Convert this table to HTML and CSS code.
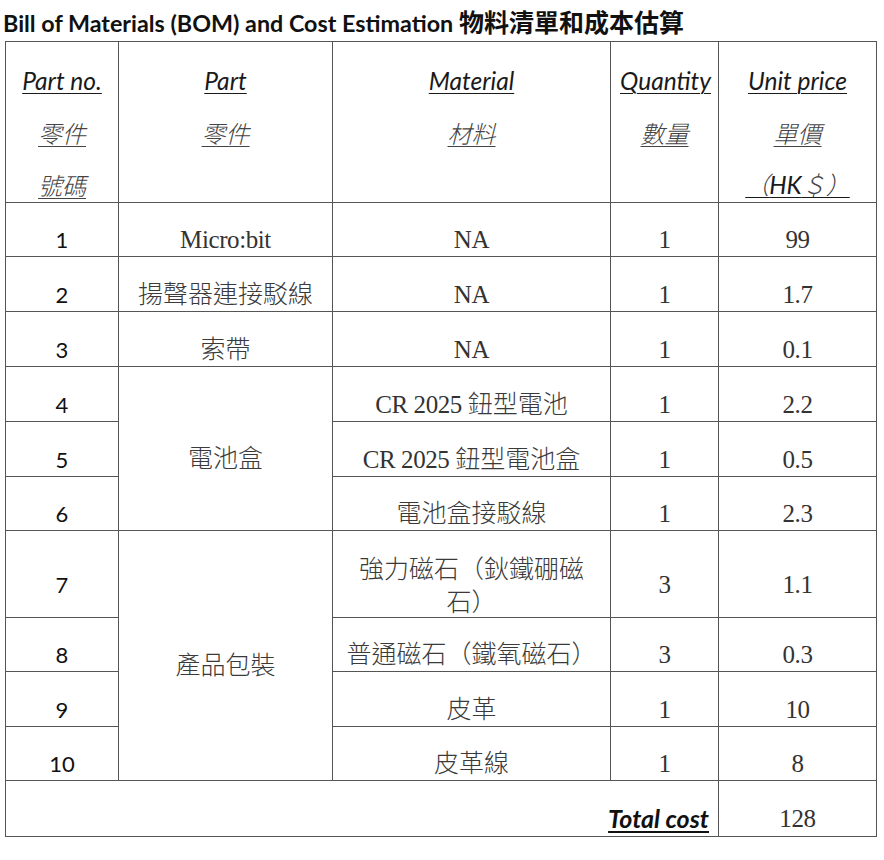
FILE: index.html
```html
<!DOCTYPE html>
<html lang="zh-Hant">
<head>
<meta charset="utf-8">
<title>BOM</title>
<link rel="stylesheet" href="styles.css">
</head>
<body>
<h1 class="title">Bill of Materials (BOM) and Cost Estimation <span class="zh">物料清單和成本估算</span></h1>
<table class="bom">
  <colgroup>
    <col class="c-no"><col class="c-part"><col class="c-mat"><col class="c-qty"><col class="c-price">
  </colgroup>
  <thead>
    <tr class="head">
      <th><div class="hl en">Part no.</div><div class="hl hz">零件</div><div class="hl hz">號碼</div></th>
      <th><div class="hl en">Part</div><div class="hl hz">零件</div></th>
      <th><div class="hl en">Material</div><div class="hl hz">材料</div></th>
      <th><div class="hl en">Quantity</div><div class="hl hz">數量</div></th>
      <th><div class="hl en">Unit price</div><div class="hl hz">單價</div><div class="hl mix"><span class="zh">（</span>HK<span class="zh">＄）</span></div></th>
    </tr>
  </thead>
  <tbody>
    <tr><td class="no">1</td><td>Micro:bit</td><td>NA</td><td>1</td><td>99</td></tr>
    <tr class="r55"><td class="no">2</td><td><span class="zh">揚聲器連接駁線</span></td><td>NA</td><td>1</td><td>1.7</td></tr>
    <tr class="r55"><td class="no">3</td><td><span class="zh">索帶</span></td><td>NA</td><td>1</td><td>0.1</td></tr>
    <tr class="r55"><td class="no">4</td><td rowspan="3"><span class="zh">電池盒</span></td><td>CR 2025 <span class="zh">鈕型電池</span></td><td>1</td><td>2.2</td></tr>
    <tr class="r55"><td class="no">5</td><td>CR 2025 <span class="zh">鈕型電池盒</span></td><td>1</td><td>0.5</td></tr>
    <tr><td class="no">6</td><td><span class="zh">電池盒接駁線</span></td><td>1</td><td>2.3</td></tr>
    <tr><td class="no">7</td><td rowspan="4"><span class="zh">產品包裝</span></td><td class="wrap">強力磁石（鈥鐵硼磁石）</td><td>3</td><td>1.1</td></tr>
    <tr><td class="no">8</td><td><span class="zh">普通磁石（鐵氧磁石）</span></td><td>3</td><td>0.3</td></tr>
    <tr class="r55"><td class="no">9</td><td><span class="zh">皮革</span></td><td>1</td><td>10</td></tr>
    <tr><td class="no">10</td><td><span class="zh">皮革線</span></td><td>1</td><td>8</td></tr>
    <tr class="total"><td colspan="4" class="total-label"><span>Total cost</span></td><td>128</td></tr>
  </tbody>
</table>
</body>
</html>
```
FILE: styles.css
```css
html, body {
  margin: 0;
  padding: 0;
  background: #ffffff;
}

body {
  padding: 0 0 0 3px;
  color: #1e1e1e;
}

.title {
  margin: 0;
  padding: 9px 0 0 0;
  font-family: Lato, "Noto Sans CJK TC", sans-serif;
  font-weight: 700;
  font-size: 23.3px;
  line-height: 28px;
  color: #111;
}

.title .zh {
  font-family: "Noto Sans CJK TC", sans-serif;
  font-size: 25px;
  font-weight: 700;
  line-height: 20px;
  color: #111;
}

.bom {
  margin: 4px 0 0 2px;
  border-collapse: collapse;
  table-layout: fixed;
  width: 871px;
  font-family: "Liberation Serif", "Noto Sans CJK TC", serif;
  font-size: 25px;
  letter-spacing: -0.4px;
  color: #333;
}

.c-no { width: 113px; }
.c-part { width: 214px; }
.c-mat { width: 278px; }
.c-qty { width: 108px; }
.c-price { width: 158px; }

.bom th,
.bom td {
  border: 1px solid #555;
  padding: 20px 9px 0;
  text-align: center;
  line-height: 33px;
}

.bom th {
  vertical-align: top;
  font-weight: 400;
  padding-top: 22px;
  padding-bottom: 1px;
}

.bom td {
  vertical-align: middle;
}

.hl {
  line-height: 33px;
  text-decoration: underline;
  text-decoration-thickness: 1px;
  text-underline-offset: 3px;
  font-style: italic;
  letter-spacing: 0;
}

.hl + .hl {
  margin-top: 19px;
}

.hl.en,
.hl.mix {
  font-family: Lato, sans-serif;
  font-size: 24.5px;
  color: #1a1a1a;
}

.hl.hz {
  font-family: "Noto Sans CJK TC", sans-serif;
  font-size: 24px;
  font-weight: 300;
  color: #444;
}

.hl.mix .zh {
  font-family: "Noto Sans CJK TC", sans-serif;
  font-weight: 300;
  font-size: 24px;
  line-height: 20px;
  color: #444;
}

.zh {
  font-family: "Noto Sans CJK TC", sans-serif;
  font-size: 25px;
  font-weight: 300;
  line-height: 24px;
  letter-spacing: 0;
  color: #3a3a3a;
}

.bom td.no {
  font-family: Lato, sans-serif;
  font-size: 22px;
  letter-spacing: 0;
  color: #111;
}

.bom td.wrap {
  padding-left: 10px;
  padding-right: 10px;
  font-family: "Noto Sans CJK TC", sans-serif;
  font-weight: 300;
  letter-spacing: 0;
  color: #3a3a3a;
}

.r55 td {
  height: 34px;
}

.total td {
  height: 35px;
}

.bom td.total-label {
  text-align: right;
  padding-right: 9px;
}

.total-label span {
  font-family: Lato, sans-serif;
  font-size: 25px;
  font-weight: 700;
  font-style: italic;
  letter-spacing: 0;
  text-decoration: underline;
  text-underline-offset: 3px;
  color: #111;
}
```
